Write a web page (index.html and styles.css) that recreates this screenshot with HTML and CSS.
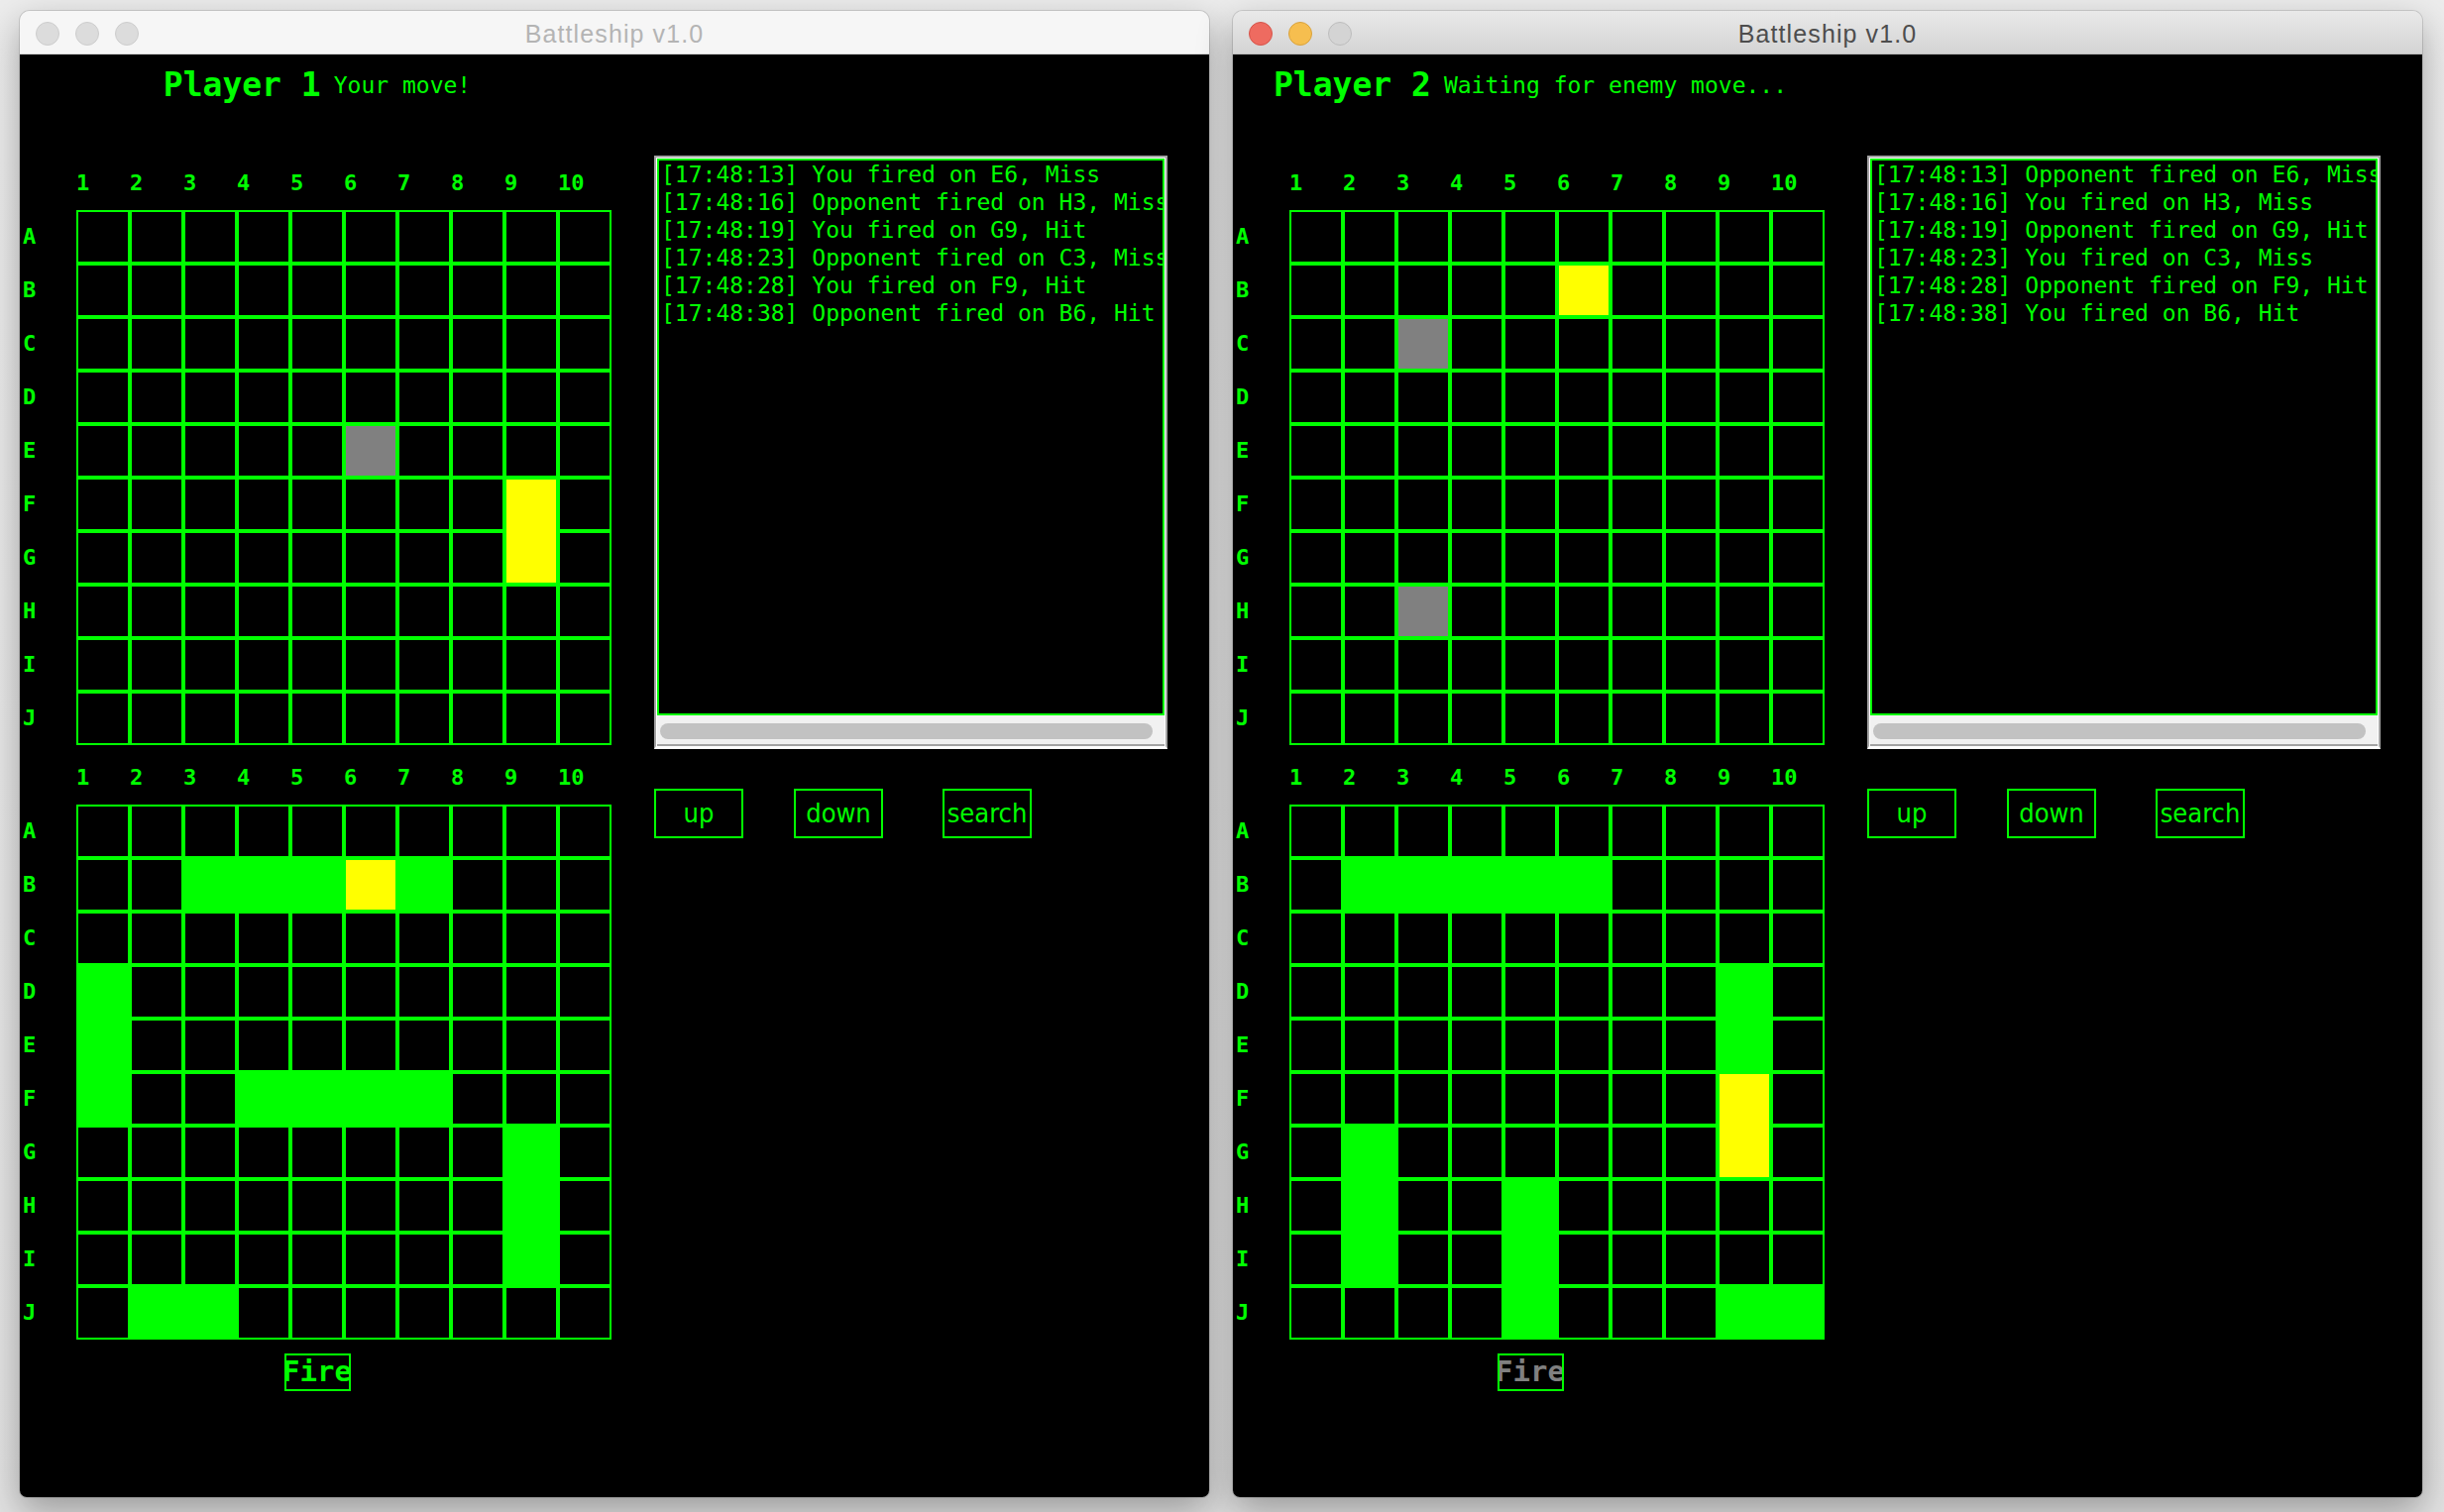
FILE: index.html
```html
<!DOCTYPE html>
<html lang="en">
<head>
<meta charset="utf-8">
<title>Battleship v1.0</title>
<link rel="stylesheet" href="styles.css">
</head>
<body>
<div class="desktop">

  <section class="window inactive">
    <header class="titlebar">
      <div class="lights"><span class="light close"></span><span class="light min"></span><span class="light max"></span></div>
      <div class="title">Battleship v1.0</div>
      <div></div>
    </header>
    <div class="content">
      <div class="left">
        <div class="status-line"><span class="player">Player 1</span><span class="status">Your move!</span></div>

        <div class="board first">
          <div class="corner"></div>
          <div class="cols"><span>1</span><span>2</span><span>3</span><span>4</span><span>5</span><span>6</span><span>7</span><span>8</span><span>9</span><span>10</span></div>
          <div class="rows"><span>A</span><span>B</span><span>C</span><span>D</span><span>E</span><span>F</span><span>G</span><span>H</span><span>I</span><span>J</span></div>
          <div class="grid">
            <i></i><i></i><i></i><i></i><i></i><i></i><i></i><i></i><i></i><i></i>
            <i></i><i></i><i></i><i></i><i></i><i></i><i></i><i></i><i></i><i></i>
            <i></i><i></i><i></i><i></i><i></i><i></i><i></i><i></i><i></i><i></i>
            <i></i><i></i><i></i><i></i><i></i><i></i><i></i><i></i><i></i><i></i>
            <i></i><i></i><i></i><i></i><i></i><i class="m"></i><i></i><i></i><i></i><i></i>
            <i></i><i></i><i></i><i></i><i></i><i></i><i></i><i></i><i class="y yd"></i><i></i>
            <i></i><i></i><i></i><i></i><i></i><i></i><i></i><i></i><i class="y"></i><i></i>
            <i></i><i></i><i></i><i></i><i></i><i></i><i></i><i></i><i></i><i></i>
            <i></i><i></i><i></i><i></i><i></i><i></i><i></i><i></i><i></i><i></i>
            <i></i><i></i><i></i><i></i><i></i><i></i><i></i><i></i><i></i><i></i>
          </div>
        </div>

        <div class="board second">
          <div class="corner"></div>
          <div class="cols"><span>1</span><span>2</span><span>3</span><span>4</span><span>5</span><span>6</span><span>7</span><span>8</span><span>9</span><span>10</span></div>
          <div class="rows"><span>A</span><span>B</span><span>C</span><span>D</span><span>E</span><span>F</span><span>G</span><span>H</span><span>I</span><span>J</span></div>
          <div class="grid">
            <i></i><i></i><i></i><i></i><i></i><i></i><i></i><i></i><i></i><i></i>
            <i></i><i></i><i class="g"></i><i class="g"></i><i class="g"></i><i class="y"></i><i class="g"></i><i></i><i></i><i></i>
            <i></i><i></i><i></i><i></i><i></i><i></i><i></i><i></i><i></i><i></i>
            <i class="g"></i><i></i><i></i><i></i><i></i><i></i><i></i><i></i><i></i><i></i>
            <i class="g"></i><i></i><i></i><i></i><i></i><i></i><i></i><i></i><i></i><i></i>
            <i class="g"></i><i></i><i></i><i class="g"></i><i class="g"></i><i class="g"></i><i class="g"></i><i></i><i></i><i></i>
            <i></i><i></i><i></i><i></i><i></i><i></i><i></i><i></i><i class="g"></i><i></i>
            <i></i><i></i><i></i><i></i><i></i><i></i><i></i><i></i><i class="g"></i><i></i>
            <i></i><i></i><i></i><i></i><i></i><i></i><i></i><i></i><i class="g"></i><i></i>
            <i></i><i class="g"></i><i class="g"></i><i></i><i></i><i></i><i></i><i></i><i></i><i></i>
          </div>
        </div>

        <div class="fire">Fire</div>
      </div>

      <div class="right">
        <div class="log">
          <div class="log-text"><div>[17:48:13] You fired on E6, Miss</div><div>[17:48:16] Opponent fired on H3, Miss</div><div>[17:48:19] You fired on G9, Hit</div><div>[17:48:23] Opponent fired on C3, Miss</div><div>[17:48:28] You fired on F9, Hit</div><div>[17:48:38] Opponent fired on B6, Hit</div></div>
          <div class="hscroll"><div class="thumb"></div></div>
        </div>
        <div class="buttons">
          <div class="btn">up</div>
          <div class="btn down">down</div>
          <div class="btn search">search</div>
        </div>
      </div>
    </div>
  </section>

  <section class="window active">
    <header class="titlebar">
      <div class="lights"><span class="light close"></span><span class="light min"></span><span class="light max"></span></div>
      <div class="title">Battleship v1.0</div>
      <div></div>
    </header>
    <div class="content">
      <div class="left">
        <div class="status-line"><span class="player">Player 2</span><span class="status">Waiting for enemy move...</span></div>

        <div class="board first">
          <div class="corner"></div>
          <div class="cols"><span>1</span><span>2</span><span>3</span><span>4</span><span>5</span><span>6</span><span>7</span><span>8</span><span>9</span><span>10</span></div>
          <div class="rows"><span>A</span><span>B</span><span>C</span><span>D</span><span>E</span><span>F</span><span>G</span><span>H</span><span>I</span><span>J</span></div>
          <div class="grid">
            <i></i><i></i><i></i><i></i><i></i><i></i><i></i><i></i><i></i><i></i>
            <i></i><i></i><i></i><i></i><i></i><i class="y"></i><i></i><i></i><i></i><i></i>
            <i></i><i></i><i class="m"></i><i></i><i></i><i></i><i></i><i></i><i></i><i></i>
            <i></i><i></i><i></i><i></i><i></i><i></i><i></i><i></i><i></i><i></i>
            <i></i><i></i><i></i><i></i><i></i><i></i><i></i><i></i><i></i><i></i>
            <i></i><i></i><i></i><i></i><i></i><i></i><i></i><i></i><i></i><i></i>
            <i></i><i></i><i></i><i></i><i></i><i></i><i></i><i></i><i></i><i></i>
            <i></i><i></i><i class="m"></i><i></i><i></i><i></i><i></i><i></i><i></i><i></i>
            <i></i><i></i><i></i><i></i><i></i><i></i><i></i><i></i><i></i><i></i>
            <i></i><i></i><i></i><i></i><i></i><i></i><i></i><i></i><i></i><i></i>
          </div>
        </div>

        <div class="board second">
          <div class="corner"></div>
          <div class="cols"><span>1</span><span>2</span><span>3</span><span>4</span><span>5</span><span>6</span><span>7</span><span>8</span><span>9</span><span>10</span></div>
          <div class="rows"><span>A</span><span>B</span><span>C</span><span>D</span><span>E</span><span>F</span><span>G</span><span>H</span><span>I</span><span>J</span></div>
          <div class="grid">
            <i></i><i></i><i></i><i></i><i></i><i></i><i></i><i></i><i></i><i></i>
            <i></i><i class="g"></i><i class="g"></i><i class="g"></i><i class="g"></i><i class="g"></i><i></i><i></i><i></i><i></i>
            <i></i><i></i><i></i><i></i><i></i><i></i><i></i><i></i><i></i><i></i>
            <i></i><i></i><i></i><i></i><i></i><i></i><i></i><i></i><i class="g"></i><i></i>
            <i></i><i></i><i></i><i></i><i></i><i></i><i></i><i></i><i class="g"></i><i></i>
            <i></i><i></i><i></i><i></i><i></i><i></i><i></i><i></i><i class="y yd"></i><i></i>
            <i></i><i class="g"></i><i></i><i></i><i></i><i></i><i></i><i></i><i class="y"></i><i></i>
            <i></i><i class="g"></i><i></i><i></i><i class="g"></i><i></i><i></i><i></i><i></i><i></i>
            <i></i><i class="g"></i><i></i><i></i><i class="g"></i><i></i><i></i><i></i><i></i><i></i>
            <i></i><i></i><i></i><i></i><i class="g"></i><i></i><i></i><i></i><i class="g"></i><i class="g"></i>
          </div>
        </div>

        <div class="fire disabled">Fire</div>
      </div>

      <div class="right">
        <div class="log">
          <div class="log-text"><div>[17:48:13] Opponent fired on E6, Miss</div><div>[17:48:16] You fired on H3, Miss</div><div>[17:48:19] Opponent fired on G9, Hit</div><div>[17:48:23] You fired on C3, Miss</div><div>[17:48:28] Opponent fired on F9, Hit</div><div>[17:48:38] You fired on B6, Hit</div></div>
          <div class="hscroll"><div class="thumb"></div></div>
        </div>
        <div class="buttons">
          <div class="btn">up</div>
          <div class="btn down">down</div>
          <div class="btn search">search</div>
        </div>
      </div>
    </div>
  </section>

</div>
</body>
</html>
```

FILE: styles.css
```css
* { box-sizing: border-box; }

html, body {
  margin: 0;
  padding: 0;
}

body {
  width: 2466px;
  height: 1526px;
  overflow: hidden;
  background: linear-gradient(#ececec, #e2e2e2);
  font-family: "DejaVu Sans Mono", monospace;
}

.desktop {
  display: flex;
  gap: 24px;
  padding: 11px 0 0 20px;
}

.window {
  width: 1200px;
  height: 1500px;
  border-radius: 10px 10px 7px 7px;
  overflow: hidden;
  box-shadow: 0 0 0 1px rgba(0, 0, 0, 0.12), 0 14px 36px rgba(0, 0, 0, 0.32);
  display: flex;
  flex-direction: column;
}

/* ---------- title bar ---------- */
.titlebar {
  height: 44px;
  flex: none;
  display: grid;
  grid-template-columns: 1fr auto 1fr;
  border-bottom: 1px solid #cdcdcd;
}

.inactive .titlebar { background: #f6f6f6; border-bottom-color: #d6d6d6; }
.active .titlebar { background: linear-gradient(#e9e9e9, #d4d4d4); border-bottom-color: #bdbdbd; }

.lights {
  display: flex;
  align-items: flex-start;
  gap: 16px;
  padding: 11px 0 0 16px;
}

.light {
  width: 24px;
  height: 24px;
  border-radius: 50%;
  border: 1px solid #cdcdcd;
  background: #dcdcdc;
}

.active .light.close { background: #ee6b60; border-color: #d5544a; }
.active .light.min { background: #f6be4f; border-color: #d9a23c; }
.active .light.max { background: #d4d4d4; border-color: #bdbdbd; }

.title {
  font-family: "Liberation Sans", Arial, sans-serif;
  font-size: 25px;
  letter-spacing: 1.1px;
  line-height: 46px;
  color: #b4b4b4;
  white-space: nowrap;
}

.active .title { color: #4d4d4d; }

/* ---------- content ---------- */
.content {
  flex: 1;
  background: #000;
  color: #00ff00;
  display: flex;
}

.left {
  width: 600px;
  flex: none;
  display: flex;
  flex-direction: column;
  align-items: center;
}

.status-line {
  margin-top: 11px;
  height: 40px;
  display: flex;
  align-items: center;
  gap: 13px;
  white-space: nowrap;
}

.player {
  font-weight: bold;
  font-size: 33px;
  line-height: 40px;
}

.status {
  font-size: 23px;
  line-height: 40px;
}

.board {
  display: grid;
  grid-template-columns: 54px 540px;
  grid-template-rows: 26px 540px;
  row-gap: 14px;
  font-weight: bold;
  font-size: 22px;
}

.board.first { margin-top: 66px; }
.board.second { margin-top: 20px; }

.cols {
  display: flex;
  line-height: 26px;
}

.cols span { width: 54px; flex: none; }

.rows {
  display: flex;
  flex-direction: column;
  gap: 4px;
  padding-top: 2px;
}

.rows span {
  height: 50px;
  line-height: 50px;
}

.grid {
  display: grid;
  grid-template-columns: repeat(10, 50px);
  grid-auto-rows: 50px;
  gap: 4px;
  border: 2px solid #00ff00;
  background: #00ff00;
}

.grid i { display: block; background: #000; }
.grid i.g { background: #00ff00; }
.grid i.y { background: #ffff00; }
.grid i.m { background: #808080; }
.grid i.yd { box-shadow: 0 4px 0 #ffff00; }

.fire {
  margin-top: 14px;
  width: 67px;
  height: 38px;
  border: 2px solid #00ff00;
  display: flex;
  justify-content: center;
  align-items: center;
  overflow: hidden;
  white-space: nowrap;
  font-weight: bold;
  font-size: 29px;
  line-height: 32px;
  padding-bottom: 2px;
}

.fire.disabled { color: #808080; }

/* ---------- right side ---------- */
.right {
  margin-left: 40px;
  padding-top: 102px;
  display: flex;
  flex-direction: column;
}

.log {
  width: 518px;
  height: 599px;
  border: 2px solid #a3a3a3;
  border-bottom: 3px solid #ffffff;
  background: #ffffff;
  padding: 1px 1px 0 1px;
  display: flex;
  flex-direction: column;
}

.log-text {
  flex: none;
  height: 562px;
  border: 2px solid #00ff00;
  background: #000;
  padding-left: 2px;
  overflow: hidden;
  white-space: pre;
  font-size: 23px;
  line-height: 28px;
  color: #00ff00;
}

.hscroll {
  flex: none;
  height: 31px;
  background: #f1f1f1;
  border-bottom: 2px solid #a3a3a3;
  padding: 8px 12px 0 3px;
}

.thumb {
  height: 16px;
  border-radius: 8px;
  background: #c2c2c2;
}

.buttons {
  margin-top: 40px;
  display: flex;
}

.btn {
  width: 90px;
  height: 50px;
  border: 2px solid #00ff00;
  text-align: center;
  font-family: "DejaVu Sans Condensed", "DejaVu Sans", sans-serif;
  font-stretch: condensed;
  font-size: 27px;
  line-height: 46px;
  white-space: nowrap;
  overflow: hidden;
}

.btn.down { margin-left: 51px; }
.btn.search { margin-left: 60px; }
```
